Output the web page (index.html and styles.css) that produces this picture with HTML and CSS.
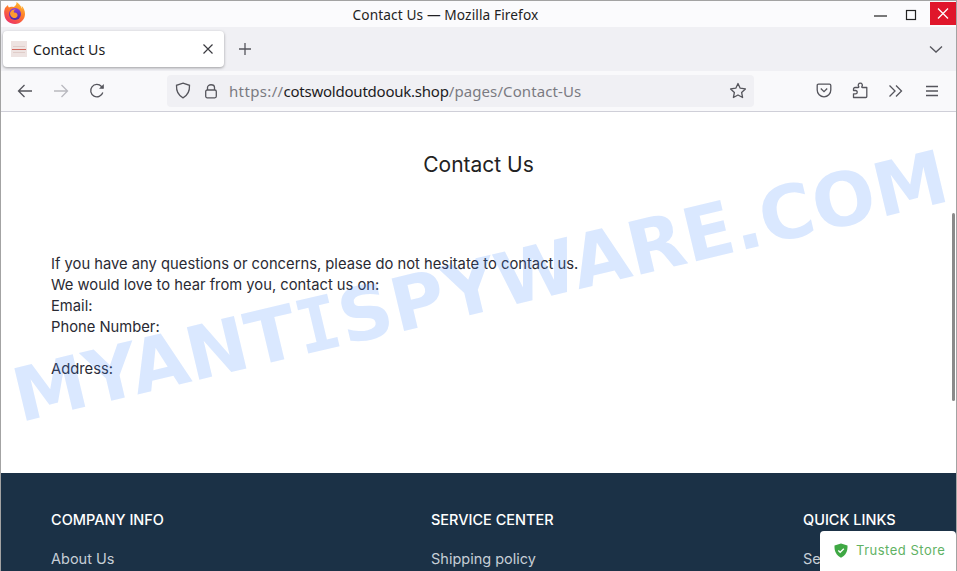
FILE: index.html
```html
<!DOCTYPE html>
<html lang="en">
<head>
<meta charset="utf-8">
<title>Contact Us</title>
<link rel="stylesheet" href="styles.css">
</head>
<body>
<div class="window">
  <header class="titlebar">
    <svg class="ff-logo" width="26" height="26" viewBox="0 0 26 26">
      <defs>
        <linearGradient id="ffa" x1="0.8" y1="0" x2="0.2" y2="1"><stop offset="0" stop-color="#ffc02e"/><stop offset="0.45" stop-color="#ff7a2a"/><stop offset="1" stop-color="#ec2a6b"/></linearGradient>
        <linearGradient id="ffb" x1="0.5" y1="0" x2="0.5" y2="1"><stop offset="0" stop-color="#8f3fd8"/><stop offset="1" stop-color="#4b2aa8"/></linearGradient>
      </defs>
      <path d="M4 8C3 11 3 12 3.400 15C4 20.500 8.500 24 14 24C19.500 24 24 19.600 24 14C24 10.500 22.500 7.500 20.500 5.800C21 7 21.200 8 21.200 9C20 5.500 17.500 3.500 15.500 2C15.800 4.500 14.500 6 12.500 7C10.500 6.500 9 6.500 8 7.500C7.500 7 7 6 7 5C5.800 5.800 5 7 4 8Z" fill="url(#ffa)"/>
      <circle cx="14" cy="14" r="6" fill="url(#ffb)"/>
      <path d="M9 13C10 10 12.500 9 15 9.600C13 10 12.500 11.500 13 12.500C15.500 12.300 17 14 16.500 16C16 17.800 13.500 18.800 11.500 17.600C10 16.800 9 15 9 13Z" fill="#ff9a2e"/>
    </svg>
    <span class="window-title">Contact Us — Mozilla Firefox</span>
    <div class="win-controls">
      <svg class="win-btn" width="38" height="26" viewBox="0 0 38 26"><path d="M20 14H33" stroke="#222" stroke-width="1.200"/></svg>
      <svg class="win-btn" width="38" height="26" viewBox="0 0 38 26"><rect x="14.500" y="8.500" width="9" height="9" fill="none" stroke="#222" stroke-width="1.200"/></svg>
      <svg class="win-btn win-close" width="26" height="23" viewBox="0 0 26 23"><path d="M8 6.500L18 16.500M18 6.500L8 16.500" stroke="#fff" stroke-width="1.300"/></svg>
    </div>
  </header>

  <nav class="tabbar">
    <div class="tab">
      <span class="favicon"><i></i><i class="fav-red"></i><i></i></span>
      <span class="tab-label">Contact Us</span>
      <svg class="tab-close" width="12" height="12" viewBox="0 0 12 12"><path d="M1.500 1.500L10.500 10.500M10.500 1.500L1.500 10.500" stroke="#3a3a40" stroke-width="1.200"/></svg>
    </div>
    <svg class="new-tab" width="14" height="14" viewBox="0 0 14 14"><path d="M7 1V13M1 7H13" stroke="#55555c" stroke-width="1.300"/></svg>
    <svg class="all-tabs" width="16" height="16" viewBox="0 0 16 16"><path d="M2 5.500L8 11L14 5.500" fill="none" stroke="#55555c" stroke-width="1.300"/></svg>
  </nav>

  <nav class="toolbar">
    <svg class="tool-icon back" width="16" height="16" viewBox="0 0 16 16"><path d="M15 8H1.500M7.500 2L1.500 8L7.500 14" fill="none" stroke="#55555c" stroke-width="1.300"/></svg>
    <svg class="tool-icon forward" width="16" height="16" viewBox="0 0 16 16"><path d="M1 8H14.500M8.500 2L14.500 8L8.500 14" fill="none" stroke="#b9b9bf" stroke-width="1.300"/></svg>
    <svg class="tool-icon reload" width="16" height="16" viewBox="0 0 16 16"><path d="M13.800 9.500A6.200 6.200 0 1 1 12.500 3.500L14 5" fill="none" stroke="#55555c" stroke-width="1.300"/><path d="M14.800 1V5.800H10Z" fill="#55555c"/></svg>
    <div class="urlbar">
      <svg class="shield" width="16" height="17" viewBox="0 0 16 17"><path d="M8 1.200L14.500 3.300C14.800 9.500 12.500 13.500 8 15.800C3.500 13.500 1.200 9.500 1.500 3.300Z" fill="none" stroke="#55555c" stroke-width="1.300"/></svg>
      <svg class="lock" width="14" height="16" viewBox="0 0 14 16"><path d="M3.500 7V4.500C3.500 0.800 10.500 0.800 10.500 4.500V7" fill="none" stroke="#55555c" stroke-width="1.300"/><rect x="1.700" y="7" width="10.600" height="7.800" rx="1.500" fill="none" stroke="#55555c" stroke-width="1.300"/></svg>
      <span class="url"><span class="url-scheme">https://</span><span class="url-host">cotswoldoutdoouk.shop</span><span class="url-path">/pages/Contact-Us</span></span>
      <svg class="star" width="18" height="17" viewBox="0 0 18 17"><path d="M9 1.500L11.200 6.200L16.400 6.900L12.600 10.400L13.600 15.500L9 13L4.400 15.500L5.400 10.400L1.600 6.900L6.800 6.200Z" fill="none" stroke="#55555c" stroke-width="1.300" stroke-linejoin="round"/></svg>
    </div>
    <div class="tool-right">
      <svg width="16" height="15" viewBox="0 0 16 15"><path d="M2.500 1.200H13.500C14.300 1.200 14.800 1.700 14.800 2.500V7C14.800 10.800 11.800 13.800 8 13.800C4.200 13.800 1.200 10.800 1.200 7V2.500C1.200 1.700 1.700 1.200 2.500 1.200Z" fill="none" stroke="#55555c" stroke-width="1.300"/><path d="M4.800 5.500L8 8.700L11.200 5.500" fill="none" stroke="#55555c" stroke-width="1.300"/></svg>
      <svg width="16" height="17" viewBox="0 0 16 17"><path d="M1.500 8.500H3.500C5.800 8.500 5.800 11.800 3.500 11.800H1.500V15.500H13.800C14.500 15.500 14.800 15.100 14.800 14.500V5.500H10.500C9.800 5.500 9.500 5 9.900 4.500C11 3 10 1.200 8.300 1.200C6.600 1.200 5.600 3 6.700 4.500C7.100 5 6.800 5.500 6.100 5.500H3C2.200 5.500 1.500 6.200 1.500 7Z" fill="none" stroke="#55555c" stroke-width="1.300" stroke-linejoin="round"/></svg>
      <svg width="16" height="14" viewBox="0 0 16 14"><path d="M1.500 1.500L7 7L1.500 12.500M8 1.500L13.500 7L8 12.500" fill="none" stroke="#55555c" stroke-width="1.300"/></svg>
      <svg class="menu-icon" width="14" height="12" viewBox="0 0 14 12"><path d="M1 1.500H13M1 6H13M1 10.500H13" stroke="#55555c" stroke-width="1.300"/></svg>
    </div>
  </nav>

  <main class="viewport">
    <section class="content">
      <h1 class="page-title">Contact Us</h1>
      <p class="page-text">If you have any questions or concerns, please do not hesitate to contact us.<br>We would love to hear from you, contact us on:<br>Email:<br>Phone Number:<br><br>Address:</p>
    </section>
    <footer class="footer">
      <div class="foot-col">
        <h2 class="foot-head">COMPANY INFO</h2>
        <a class="foot-link">About Us</a>
      </div>
      <div class="foot-col">
        <h2 class="foot-head">SERVICE CENTER</h2>
        <a class="foot-link">Shipping policy</a>
      </div>
      <div class="foot-col">
        <h2 class="foot-head">QUICK LINKS</h2>
        <a class="foot-link">Search</a>
      </div>
    </footer>
    <div class="scroll-thumb"></div>
    <div class="trust-badge">
      <svg width="14" height="15" viewBox="0 0 14 15"><path d="M7 0.500L13.500 2.500C13.800 8.500 11.500 12.500 7 14.800C2.500 12.500 0.200 8.500 0.500 2.500Z" fill="#3fa844"/><path d="M4.300 7.500L6.200 9.300L9.800 5.700" fill="none" stroke="#fff" stroke-width="1.300"/></svg>
      <span>Trusted Store</span>
    </div>
  </main>
  <div class="watermark">MYANT<span class="wm-i">I</span>SPYWARE.COM</div>
</div>
</body>
</html>
```
FILE: styles.css
```css
* { box-sizing: border-box; }
html, body { margin: 0; height: 100%; overflow: hidden; background: #fff; }
.window {
  position: relative;
  width: 957px;
  height: 571px;
  display: flex;
  flex-direction: column;
  overflow: hidden;
  border: 1px solid #a3a3a3;
  border-bottom: 0;
  font-family: "Noto Sans", sans-serif;
}
.titlebar {
  position: relative;
  flex: 0 0 26px;
  background: #fbfbfd;
  display: flex;
  align-items: center;
  justify-content: center;
}
.ff-logo { position: absolute; left: 0; top: -1px; }
.window-title { font-size: 13.700px; color: #1f1f23; letter-spacing: 0.1px; margin-top: 1px; margin-right: 66px; }
.win-controls { position: absolute; right: 0; top: 1px; display: flex; align-items: flex-start; }
.win-btn { display: block; }
.win-close { background: #e0162b; }
.tabbar {
  flex: 0 0 44px;
  background: #f0f0f4;
  display: flex;
  align-items: center;
  padding-left: 2px;
}
.tab {
  width: 221px;
  height: 36px;
  background: #fff;
  border-radius: 4px;
  box-shadow: 0 1px 3px rgba(0, 0, 0, 0.35);
  display: flex;
  align-items: center;
  padding: 0 10px 0 8px;
}
.favicon {
  width: 16px;
  height: 16px;
  background: #eee3e1;
  display: flex;
  flex-direction: column;
  align-items: center;
  justify-content: center;
  gap: 2px;
  flex: none;
}
.favicon i { display: block; width: 12px; height: 1px; background: #e0cdc9; }
.favicon .fav-red { width: 14px; background: #d4685e; }
.tab-label { flex: 1; margin-left: 6px; font-size: 14.200px; color: #1c1b22; }
.tab-close { flex: none; }
.new-tab { margin-left: 14px; }
.all-tabs { margin-left: auto; margin-right: 12px; }
.toolbar {
  flex: 0 0 41px;
  background: #f9f9fb;
  border-bottom: 1px solid #cfcfd8;
  display: flex;
  align-items: center;
  padding-bottom: 1px;
}
.tool-icon { flex: none; }
.back { margin-left: 16px; }
.forward { margin-left: 20px; }
.reload { margin-left: 20px; }
.urlbar {
  width: 587px;
  height: 32px;
  margin-left: 62px;
  background: #f0f0f4;
  border-radius: 4px;
  display: flex;
  align-items: center;
  padding: 0 7px 0 8px;
}
.lock { margin-left: 13px; }
.url { margin-left: 11px; font-size: 15px; flex: 1; white-space: nowrap; }
.url-scheme { color: #7b7b82; letter-spacing: 0.35px; }
.url-host { color: #1c1b22; letter-spacing: -0.23px; }
.url-path { color: #7b7b82; letter-spacing: 0.1px; }
.tool-right {
  margin-left: 62px;
  display: flex;
  align-items: center;
  gap: 20px;
}
.menu-icon { margin-left: 1px; }
.viewport {
  position: relative;
  flex: 1;
  min-height: 0;
  display: flex;
  flex-direction: column;
  overflow: hidden;
  background: #fff;
  font-family: Inter, sans-serif;
}
.content { flex: 0 0 361px; padding: 40px 50px 0; }
.page-title {
  margin: 0;
  text-align: center;
  font-size: 21px;
  line-height: 26px;
  font-weight: 400;
  color: #222;
}
.page-text {
  margin: 76px 0 0;
  font-size: 14.750px;
  line-height: 21px;
  color: #2a2a33;
}
.footer {
  flex: 1;
  background: #1b3146;
  display: grid;
  grid-template-columns: 380px 372px 1fr;
  padding: 37px 0 0 50px;
}
.foot-head {
  margin: 0 0 19px;
  font-size: 14.500px;
  line-height: 20px;
  font-weight: 500;
  color: #fff;
  white-space: nowrap;
}
.foot-link { display: block; font-size: 14.500px; line-height: 20px; color: #c6ced6; }
.scroll-thumb {
  position: absolute;
  right: 1px;
  top: 101px;
  width: 3px;
  height: 188px;
  background: #8b8b8b;
  border-radius: 2px;
}
.trust-badge {
  position: absolute;
  right: 0;
  bottom: 0;
  width: 136px;
  height: 40px;
  background: #fff;
  border-radius: 4px 4px 0 0;
  display: flex;
  align-items: center;
  gap: 8px;
  padding: 0 0 2px 14px;
  font-size: 13px;
  letter-spacing: 0.5px;
  color: #5fb264;
}
.watermark {
  position: absolute;
  left: -31px;
  top: 245px;
  width: 1020px;
  text-align: center;
  transform: rotate(-13.400deg);
  font-family: "DejaVu Sans", sans-serif;
  font-size: 74px;
  line-height: 80px;
  font-weight: 700;
  white-space: nowrap;
  color: rgba(70, 140, 255, 0.2);
  pointer-events: none;
}
.wm-i { font-family: "DejaVu Sans Mono", monospace; }
```
